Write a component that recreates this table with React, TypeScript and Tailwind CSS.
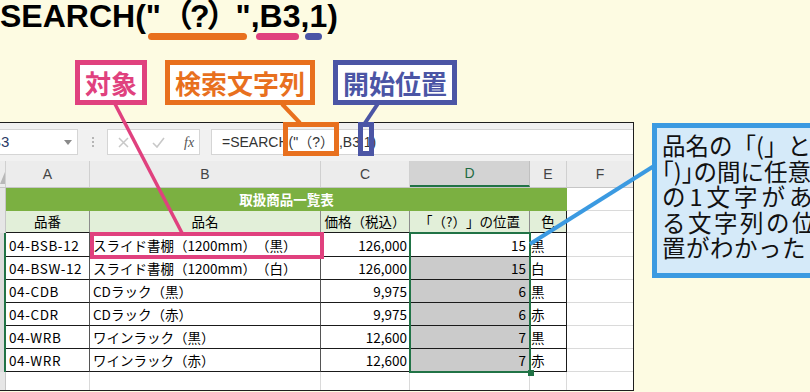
import React from 'react';

const rows = [
  { code: '04-BSB-12', name: 'スライド書棚（1200mm）（黒）', price: '126,000', pos: 15, color: '黒' },
  { code: '04-BSW-12', name: 'スライド書棚（1200mm）（白）', price: '126,000', pos: 15, color: '白' },
  { code: '04-CDB', name: 'CDラック（黒）', price: '9,975', pos: 6, color: '黒' },
  { code: '04-CDR', name: 'CDラック（赤）', price: '9,975', pos: 6, color: '赤' },
  { code: '04-WRB', name: 'ワインラック（黒）', price: '12,600', pos: 7, color: '黒' },
  { code: '04-WRR', name: 'ワインラック（赤）', price: '12,600', pos: 7, color: '赤' },
];

const RowHead = ({ sel = false }: { sel?: boolean }) => (
  <div
    className={
      sel
        ? 'w-[6px] shrink-0 bg-[#dcdcdc] border-r-2 border-[#217346]'
        : 'w-[6px] shrink-0 bg-[#e6e6e6] border-r border-[#c6c6c6]'
    }
  />
);

const FormulaBar = () => (
  <div className="flex h-[32px] shrink-0 items-start pt-[6px]">
    <div className="flex h-[26px] w-[78px] shrink-0 items-center overflow-hidden border border-l-0 border-[#d5d5d5] bg-white">
      <span className="-ml-[9px] font-['Liberation_Sans',sans-serif] text-[15px] text-[#2a3a66]">B3</span>
      <svg className="ml-auto mr-[5px]" width="8" height="5" viewBox="0 0 8 5">
        <polygon points="0,0 8,0 4,5" fill="#8a8a8a" />
      </svg>
    </div>
    <div className="flex h-[26px] w-[29px] shrink-0 flex-col items-center justify-center gap-[2px]">
      <span className="h-[2px] w-[2px] bg-[#b5b5b5]" />
      <span className="h-[2px] w-[2px] bg-[#b5b5b5]" />
      <span className="h-[2px] w-[2px] bg-[#b5b5b5]" />
    </div>
    <div className="flex h-[26px] w-[93px] shrink-0 items-center border border-[#d5d5d5] bg-white pl-[10px]">
      <svg width="11" height="11" viewBox="0 0 11 11">
        <path d="M1 1 L10 10 M10 1 L1 10" stroke="#c8c8c8" strokeWidth="1.5" fill="none" />
      </svg>
      <svg className="ml-[23px]" width="13" height="11" viewBox="0 0 13 11">
        <path d="M1 6 L5 10 L12 1" stroke="#c8c8c8" strokeWidth="1.6" fill="none" />
      </svg>
      <span className="ml-[19px] font-['Liberation_Serif',serif] text-[14px] italic text-[#555]">fx</span>
    </div>
    <div className="ml-[11px] flex h-[26px] flex-1 items-center border border-r-0 border-[#d5d5d5] bg-white pl-[10px] font-['Liberation_Sans','Noto_Sans_CJK_JP',sans-serif] text-[14px] text-[#333] whitespace-nowrap">
      {'=SEARCH("（?）",B3,1)'}
    </div>
  </div>
);

const ColHeads = () => (
  <div className="flex h-[27px] shrink-0 border-b border-[#c6c6c6] bg-[#ececec] font-['Liberation_Sans',sans-serif] text-[14px] text-[#444]">
    <div className="flex w-[6px] shrink-0 items-end justify-end border-r border-[#d0d0d0] pb-[3px]">
      <svg width="5" height="12" viewBox="0 0 5 12">
        <polygon points="5,0 5,12 0,12" fill="#b8b8b8" />
      </svg>
    </div>
    <div className="flex w-[84px] shrink-0 items-center justify-center border-r border-[#d0d0d0]">A</div>
    <div className="flex w-[231px] shrink-0 items-center justify-center border-r border-[#d0d0d0]">B</div>
    <div className="flex w-[89px] shrink-0 items-center justify-center border-r border-[#d0d0d0]">C</div>
    <div className="flex w-[120px] shrink-0 items-center justify-center border-r border-b-2 border-r-[#c0c0c0] border-b-[#217346] bg-[#d3d3d3] text-[#1f6b42]">D</div>
    <div className="flex w-[37px] shrink-0 items-center justify-center border-r border-[#d0d0d0]">E</div>
    <div className="flex flex-1 items-center justify-center">F</div>
  </div>
);

const Sheet = () => (
  <div className="flex flex-1 flex-col bg-white text-[13.5px] text-black">
    <div className="flex h-[23px] shrink-0">
      <RowHead />
      <div className="flex w-[561px] shrink-0 items-center justify-center bg-[#7bb041] font-bold text-white">
        取扱商品一覧表
      </div>
      <div className="flex-1 border-b border-[#dadada]" />
    </div>
    <div className="flex h-[22px] shrink-0">
      <RowHead />
      <div className="flex w-[84px] shrink-0 items-center justify-center border-r border-b border-r-[#8c8c8c] border-b-[#1a1a1a] bg-[#e2efd9]">品番</div>
      <div className="flex w-[231px] shrink-0 items-center justify-center border-r border-b border-r-[#8c8c8c] border-b-[#1a1a1a] bg-[#e2efd9]">品名</div>
      <div className="flex w-[89px] shrink-0 items-center justify-center border-r border-b border-r-[#8c8c8c] border-b-[#1a1a1a] bg-[#e2efd9] whitespace-nowrap">価格（税込）</div>
      <div className="flex w-[120px] shrink-0 items-center justify-center border-r border-b border-r-[#8c8c8c] border-b-[#1a1a1a] bg-[#e2efd9] whitespace-nowrap">「（?）」の位置</div>
      <div className="flex w-[37px] shrink-0 items-center justify-center border-r border-b border-r-[#1a1a1a] border-b-[#1a1a1a] bg-[#e2efd9]">色</div>
      <div className="flex-1 border-b border-[#dadada]" />
    </div>
    {rows.map((r, i) => (
      <div key={r.code} className={i === 0 ? 'flex h-[24px] shrink-0' : 'flex h-[23px] shrink-0'}>
        <RowHead sel />
        <div className="flex w-[84px] shrink-0 items-center border-r border-b border-r-[#555] border-b-[#1a1a1a] pl-[3px] pt-[1px] tracking-[0.6px] whitespace-nowrap">{r.code}</div>
        <div className="flex w-[231px] shrink-0 items-center border-r border-b border-r-[#555] border-b-[#1a1a1a] pl-[3px] pt-[1px] whitespace-nowrap">{r.name}</div>
        <div className="flex w-[89px] shrink-0 items-center justify-end border-r border-b border-r-[#555] border-b-[#1a1a1a] pr-[2px] pt-[1px]">{r.price}</div>
        <div className={i === 0 ? 'flex w-[120px] shrink-0 items-center justify-end border-r border-b border-[#1a1a1a] bg-white pr-[3px] pt-[1px]' : 'flex w-[120px] shrink-0 items-center justify-end border-r border-b border-[#1a1a1a] bg-[#cbcbcb] pr-[3px] pt-[1px]'}>{r.pos}</div>
        <div className="flex w-[37px] shrink-0 items-center border-r border-b border-[#1a1a1a] pl-[1px] pt-[1px]">{r.color}</div>
        <div className="flex-1 border-b border-[#dadada]" />
      </div>
    ))}
    <div className="flex flex-1">
      <RowHead />
      <div className="w-[84px] shrink-0 border-r border-[#dadada]" />
      <div className="w-[231px] shrink-0 border-r border-[#dadada]" />
      <div className="w-[89px] shrink-0 border-r border-[#dadada]" />
      <div className="w-[120px] shrink-0 border-r border-[#dadada]" />
      <div className="w-[37px] shrink-0 border-r border-[#dadada]" />
      <div className="flex-1" />
    </div>
  </div>
);

const Excel = () => (
  <div className="flex h-[269px] w-[634px] shrink-0 flex-col overflow-hidden border-t border-r border-b border-[#1e1e1e] bg-[#f1f1f1] font-['Noto_Sans_CJK_JP',sans-serif]">
    <FormulaBar />
    <div className="h-[6px] shrink-0" />
    <ColHeads />
    <Sheet />
  </div>
);

const Label = ({ text, tone }: { text: string; tone: string }) => (
  <div className={`flex h-[45px] items-center border-[5px] bg-white px-[5px] text-[26px] font-bold leading-none ${tone}`}>
    {text}
  </div>
);

export default function App() {
  return (
    <div className="relative h-[392px] w-[810px] overflow-hidden bg-[#fdfbe2] font-['Noto_Sans_CJK_JP',sans-serif] text-black [text-spacing-trim:space-all]">
      <div className="h-[32px] whitespace-nowrap font-['Liberation_Sans','Noto_Sans_CJK_JP',sans-serif] text-[32px] font-bold leading-[32px]">
        SEARCH("<span className="tracking-[-3px]">（?）</span>",B3,1)
      </div>
      <div className="mt-[1px] flex h-[7px]">
        <div className="ml-[148px] w-[99px] rounded-full bg-[#e8701e]" />
        <div className="ml-[9px] w-[43px] rounded-full bg-[#e0417e]" />
        <div className="ml-[6px] w-[17px] rounded-full bg-[#4b55a5]" />
      </div>
      <div className="mt-[20px] flex gap-[18px] pl-[75px]">
        <Label text="対象" tone="border-[#e0417e] text-[#e0417e]" />
        <Label text="検索文字列" tone="border-[#e8701e] text-[#e8701e]" />
        <Label text="開始位置" tone="border-[#4b55a5] text-[#4b55a5]" />
      </div>
      <div className="mt-[17px] flex items-start">
        <Excel />
        <div className="ml-[18px] mt-[1px] h-[155px] w-[200px] shrink-0 whitespace-nowrap border-[5px] border-[#3b9ae1] bg-[#d5eaf9] pl-[5px] pt-[5px] text-[23.5px] leading-[25.5px] text-[#111]">
          <div>品名の「(」と</div>
          <div>｢)｣の間に任意</div>
          <div className="tracking-[4px]">の1文字があ</div>
          <div className="tracking-[2.5px]">る文字列の位</div>
          <div className="tracking-[0.5px]">置がわかった</div>
        </div>
      </div>

      {/* selection D3:D8 */}
      <div className="absolute left-[409px] top-[232px] h-[141px] w-[122px] border-2 border-[#217346]">
        <div className="absolute -bottom-[5px] -right-[5px] h-[6px] w-[6px] bg-[#217346]" />
      </div>

      {/* annotation frames */}
      <div className="absolute left-[90px] top-[232px] h-[27px] w-[234px] border-4 border-[#e0417e]" />
      <div className="absolute left-[283px] top-[122px] h-[34px] w-[56px] border-[5px] border-[#e8701e]" />
      <div className="absolute left-[358px] top-[122px] h-[34px] w-[16px] border-[5px] border-[#4b55a5]" />

      <svg className="pointer-events-none absolute left-0 top-0" width="810" height="392">
        <line x1="115" y1="104" x2="182" y2="233" stroke="#e0417e" strokeWidth="3.5" />
        <line x1="282" y1="104" x2="300" y2="123" stroke="#e8701e" strokeWidth="4" />
        <line x1="379" y1="102" x2="365" y2="123" stroke="#4b55a5" strokeWidth="4" />
        <line x1="654" y1="166" x2="530" y2="244" stroke="#3b9ae1" strokeWidth="4" />
      </svg>
    </div>
  );
}
